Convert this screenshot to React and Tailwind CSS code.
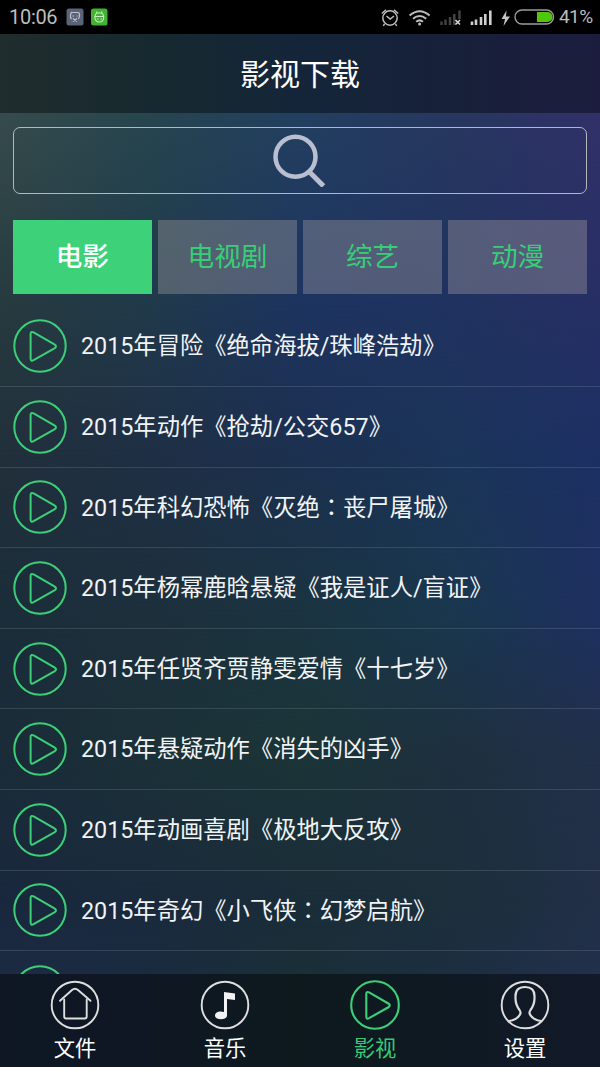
import React from "react";

const movies = [
  "2015年冒险《绝命海拔/珠峰浩劫》",
  "2015年动作《抢劫/公交657》",
  "2015年科幻恐怖《灭绝：丧尸屠城》",
  "2015年杨幂鹿晗悬疑《我是证人/盲证》",
  "2015年任贤齐贾静雯爱情《十七岁》",
  "2015年悬疑动作《消失的凶手》",
  "2015年动画喜剧《极地大反攻》",
  "2015年奇幻《小飞侠：幻梦启航》",
];

const tabs = ["电影", "电视剧", "综艺", "动漫"];

// Horizontal colour bands, each one fading in below the previous.
const bands = [
  "bg-[linear-gradient(to_right,#364b4c,#26454f_25%,#223f60_50%,#27375f_75%,#303168)]",
  "bg-[linear-gradient(to_right,#273b3f,#203a4b_25%,#1d3460_50%,#203360_75%,#272f64)] [mask-image:linear-gradient(transparent_120px,black_300px)]",
  "bg-[linear-gradient(to_right,#22303b,#1f2f45_25%,#1c3050_50%,#1b3459_75%,#1c3063)] [mask-image:linear-gradient(transparent_300px,black_450px)]",
  "bg-[linear-gradient(to_right,#1b2d3a,#1d303c_25%,#1a3440_50%,#19374d_75%,#1e3060)] [mask-image:linear-gradient(transparent_450px,black_620px)]",
  "bg-[linear-gradient(to_right,#1a2c38,#1b3138_25%,#1b3537_50%,#1e303f_75%,#22304a)] [mask-image:linear-gradient(transparent_620px,black_750px)]",
  "bg-[linear-gradient(to_right,#19283d,#1a2a3c_25%,#1a2d39_50%,#1c2f3b_75%,#222f47)] [mask-image:linear-gradient(transparent_750px,black_900px)]",
  "bg-[linear-gradient(to_right,#1c2a43,#1a2b40_25%,#1a2f38_50%,#1c2e40_75%,#22304c)] [mask-image:linear-gradient(transparent_900px,black_970px)]",
];

function PlayIcon({ className, stroke = 2 }) {
  return (
    <svg viewBox="0 0 54 54" className={className} fill="none" stroke="#3ccf78" strokeWidth={stroke} strokeLinejoin="round">
      <circle cx="27" cy="27" r="25.7" />
      <path d="M17.6 15v24.5q0 3.2 3 1.7l20.8-11.8q3.2-2 0-4L20.6 13.4q-3-1.5-3 1.6z" />
    </svg>
  );
}

function StatusBar() {
  return (
    <div className="flex h-[33.5px] shrink-0 items-center bg-black pl-[9px] text-[#bdbdbd]">
      <span className="w-[57px] text-[20px] leading-none tracking-[-0.3px]">10:06</span>
      <svg className="h-[18px] w-[42px]" viewBox="0 0 42 18" fill="none">
        <rect x=".5" y=".5" width="17" height="17" rx="2.5" fill="#5b6379" />
        <path d="M5.5 11Q4 10 4.5 7T6 4.5h6q1.500 0 1.500 2.500t-1 4M6.500 8h1.500M10.500 8h1M7 10.500l4 3M11 10.500l-4 3" stroke="#bfc3cd" strokeWidth="1.200" />
        <rect x="25" y=".5" width="16.500" height="17" rx="2.500" fill="#43b234" />
        <path d="M28.500 8.500h9.500M29 8q.2-2 2-3l-.5-1.500M37.500 8q-.2-2-2-3l.5-1.500M31 5h4.500M28.800 8.500q0 5.500 4.500 5.500t4.500-5.500M31 11h1.500M34.500 11H36" stroke="#c6ecbf" strokeWidth="1.100" />
      </svg>
      <div className="ml-auto flex items-center">
        <svg className="h-[20px] w-[134px]" viewBox="376 6 134 20" fill="none" stroke="#bdbdbd" strokeWidth="1.500">
          <circle cx="386" cy="17" r="7.200" />
          <path d="M377.800 12.500l4.200-3.700M394.200 12.500L390 8.800M382.500 15l3.700 3 3.800-3M380.500 23l-1.200 1.800M391.500 23l1.200 1.800" />
          <path d="M405.600 14.500q10-8.500 20 0M409 17.800q6.600-5.500 13.200 0M412.200 20.700q3.400-2.700 6.800 0" strokeWidth="2" />
          <circle cx="415.600" cy="23" r="1.500" fill="#bdbdbd" stroke="none" />
          <path d="M437.500 24v-3.500M441.500 24v-5.500M446 24v-8M450.300 24v-11M455.500 18v-8.500" stroke="#424242" strokeWidth="2.500" />
          <path d="M451.500 19l4.500 4.500M456 19l-4.500 4.500" stroke="#dedede" />
          <path d="M468 24v-3.500M472 24v-5.500M477 24v-8M481.300 24v-11M486.300 24v-14.500" stroke="#d0d0d0" strokeWidth="2.600" />
          <path d="M502.500 9.500l-5 8.500h3.500l-1.500 7 6.500-9.500h-4z" fill="#c4c4c4" stroke="none" />
        </svg>
        <svg className="h-[16px] w-[41px]" viewBox="0 0 41 16" fill="none">
          <path d="M23 3h10.500a5 5 0 0 1 0 10H23z" fill="#4fc70a" />
          <rect x="1" y="1" width="38.500" height="14" rx="7" stroke="#9c9c9c" strokeWidth="1.400" />
        </svg>
        <span className="w-[45px] pl-[4px] text-[19px] leading-none tracking-[-0.6px]">41%</span>
      </div>
    </div>
  );
}

function NavRing({ children }) {
  return (
    <svg viewBox="0 0 50 50" className="h-[50px] w-[50px]" fill="none" stroke="#dedede" strokeWidth="1.900" strokeLinecap="round" strokeLinejoin="round">
      <circle cx="25" cy="25" r="23.300" />
      {children}
    </svg>
  );
}

const navItems = [
  {
    label: "文件",
    icon: (
      <NavRing>
        <path d="M10 20.800L22 10q3-2.700 6 0l12.500 10.800" />
        <path d="M14.200 19.500v17q0 2 2 2h18.500q2 0 2-2v-17" />
      </NavRing>
    ),
  },
  {
    label: "音乐",
    icon: (
      <NavRing>
        <path d="M24 12l11 1.500v6.500l-8-1v16.500c0 5-12 5-12 0 0-3.500 5-5 9-3.500z" fill="#f2f2f2" stroke="none" />
      </NavRing>
    ),
  },
  { label: "影视", active: true, icon: <PlayIcon className="h-[50px] w-[50px]" stroke={2.3} /> },
  {
    label: "设置",
    icon: (
      <NavRing>
        <path d="M9 41q8-1 11-6.500 1.200-2-.5-4.500-4-5.500-4-11.500V16q0-9 9.500-9t9.500 9v2.500q0 6-4 11.500-1.700 2.500-.5 4.500 3 5.500 11 6.500" strokeWidth="2.200" />
      </NavRing>
    ),
  },
];

function Title({ text }) {
  const parts = text.split("：");
  return (
    <span className="ml-[14px] whitespace-nowrap text-[23.3px] leading-[30px]">
      {parts.map((part, i) => (
        <React.Fragment key={i}>
          {i > 0 && <span className="font-['Noto_Sans_CJK_TC',sans-serif]" lang="zh-TW">：</span>}
          {part}
        </React.Fragment>
      ))}
    </span>
  );
}

export default function App() {
  return (
    <div lang="zh-CN" className="relative isolate flex h-[1067px] w-[600px] flex-col overflow-hidden bg-[#1c3050] font-[Roboto,'Noto_Sans_CJK_SC',sans-serif] text-[#f1f3f5]">
      {bands.map((band) => (
        <div key={band} className={`absolute inset-0 -z-10 ${band}`} />
      ))}
      <StatusBar />
      <header className="flex h-[79.500px] shrink-0 items-center justify-center bg-black/40 pt-[3px] text-[30px] leading-none text-white">影视下载</header>
      <div className="mx-[13px] mt-[13.500px] flex h-[67px] shrink-0 items-center justify-center rounded-[7px] border-[1.500px] border-[#b5b8b9]">
        <svg className="h-[54px] w-[54px]" viewBox="0 0 54 54" fill="none" stroke="#b9bfd0">
          <circle cx="22.500" cy="23.700" r="20" strokeWidth="4.500" />
          <path d="M36 38.500L50.500 53" strokeWidth="5" />
        </svg>
      </div>
      <div className="mx-[13px] mt-[26.500px] grid h-[73.500px] shrink-0 grid-cols-4 gap-[6.300px] text-[26.600px] leading-none">
        {tabs.map((tab, i) => (
          <button key={tab} className={`flex items-center justify-center pt-[2px] ${i === 0 ? "bg-[#3dd179] font-medium text-white" : "bg-[#b3a9a9]/35 text-[#38ce76]"}`}>
            {tab}
          </button>
        ))}
      </div>
      <main className="mt-[13px] min-h-0 flex-1 overflow-hidden">
        {movies.map((movie) => (
          <div key={movie} className="flex h-[80.600px] items-center border-b border-white/12 pl-[13px]">
            <PlayIcon className="h-[54px] w-[54px] shrink-0" />
            <Title text={movie} />
          </div>
        ))}
        <div className="flex h-[80.600px] items-center pl-[13px]">
          <PlayIcon className="h-[54px] w-[54px] shrink-0" />
        </div>
      </main>
      <nav className="grid h-[93.500px] shrink-0 grid-cols-4 bg-black/45 text-[21.300px] text-white">
        {navItems.map((item) => (
          <div key={item.label} className={`flex flex-col items-center pt-[6.500px] ${item.active ? "text-[#38c976]" : ""}`}>
            {item.icon}
            <span className="mt-[5px] leading-[28px]">{item.label}</span>
          </div>
        ))}
      </nav>
    </div>
  );
}
